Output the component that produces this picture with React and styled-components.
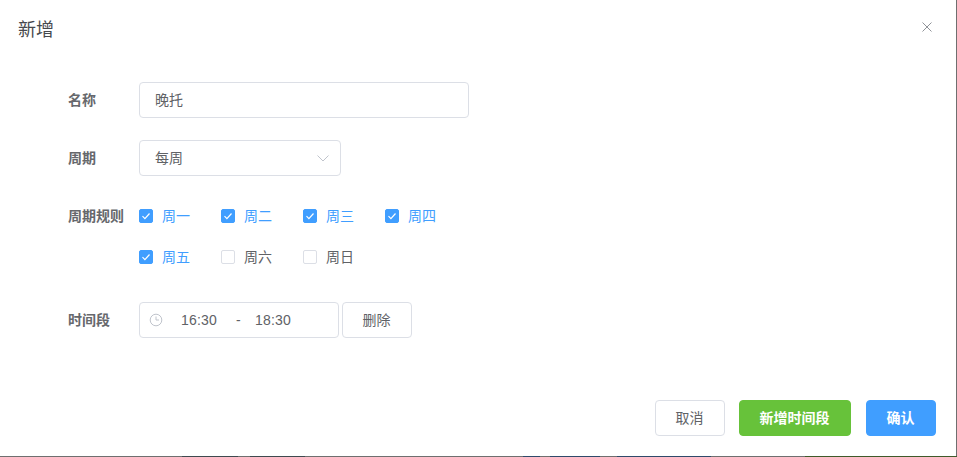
import React from "react";
import styled, { createGlobalStyle } from "styled-components";

const Global = createGlobalStyle`
  html, body { margin: 0; padding: 0; background: #6f6f6f; overflow: hidden; }
  * { box-sizing: border-box; }
`;

const font = `"Liberation Sans", "Noto Sans CJK SC", sans-serif`;

const Dialog = styled.div`
  width: 956px;
  height: 456px;
  background: #fff;
  font-family: ${font};
  display: flex;
  flex-direction: column;
  color: #606266;
`;

const Header = styled.header`
  height: 60px;
  padding: 18px 18px 0;
  display: flex;
  justify-content: space-between;
  align-items: flex-start;
`;

const Title = styled.h2`
  margin: 0;
  font-size: 18px;
  font-weight: 400;
  line-height: 24px;
  color: #47494d;
`;

const Close = styled.button`
  border: 0;
  background: none;
  padding: 0;
  width: 10px;
  height: 10px;
  margin: 4px 6px 0 0;
  display: flex;
  color: #909399;
`;

const Form = styled.form`
  flex: 1;
  padding: 22px 0 0 68px;
  display: flex;
  flex-direction: column;
`;

const Row = styled.div`
  display: flex;
  margin-bottom: ${(p) => p.$mb ?? 22}px;
`;

const Label = styled.label`
  width: 71px;
  flex: none;
  font-size: 14px;
  font-weight: 700;
  line-height: 36px;
  color: #66686c;
`;

const Field = styled.div`
  height: 36px;
  border: 1px solid #dcdfe6;
  border-radius: 4px;
  background: #fff;
  display: flex;
  align-items: center;
  font-size: 14px;
  color: #606266;
  width: ${(p) => p.$w}px;
  padding: 0 ${(p) => p.$pr ?? 15}px 0 15px;
  justify-content: ${(p) => p.$justify ?? "flex-start"};
`;

const FieldText = styled.span`
  padding-bottom: 2px;
`;

const Checks = styled.div`
  display: grid;
  grid-template-columns: repeat(4, 82px);
  row-gap: 5px;
`;

const Check = styled.span`
  height: 36px;
  display: flex;
  align-items: center;
  gap: 9px;
  font-size: 14px;
  color: ${(p) => (p.$on ? "#409eff" : "#606266")};
`;

const CheckText = styled.span`
  padding-bottom: 2px;
`;

const Box = styled.span`
  width: 14px;
  height: 14px;
  border-radius: 2px;
  border: 1px solid ${(p) => (p.$on ? "#409eff" : "#dcdfe6")};
  background: ${(p) => (p.$on ? "#409eff" : "#fff")};
  display: flex;
  align-items: center;
  justify-content: center;
`;

const TimeRange = styled(Field)`
  padding: 0 0 0 9px;
  color: #606266;
`;

const Time = styled.span`
  margin-left: ${(p) => p.$ml}px;
  letter-spacing: 0.2px;
  padding-bottom: 1px;
`;

const Plain = styled.button`
  font-family: ${font};
  font-size: 14px;
  height: 36px;
  border-radius: 4px;
  border: 1px solid ${(p) => p.$bg ?? "#dcdfe6"};
  background: ${(p) => p.$bg ?? "#fff"};
  color: ${(p) => (p.$bg ? "#fff" : "#606266")};
  font-weight: ${(p) => (p.$bg ? 700 : 400)};
  width: ${(p) => p.$w}px;
  padding: 0 1px 2px 0;
  margin-left: ${(p) => p.$ml ?? 0}px;
`;

const Footer = styled.footer`
  display: flex;
  justify-content: flex-end;
  padding: 0 20px 20px 0;
`;

const Bottom = styled.div`
  height: 1px;
  width: 957px;
  background: linear-gradient(
    90deg,
    #6f6f6f 0 182px,
    #3f4a4f 182px 238px,
    #6f6f6f 238px 250px,
    #3f4a4f 250px 305px,
    #6f6f6f 305px 523px,
    #2f4a6a 523px 540px,
    #6f6f6f 540px 550px,
    #2f4a6a 550px 600px,
    #6f6f6f 600px 617px,
    #2f4a6a 617px 711px,
    #6f6f6f 711px 805px,
    #3f5a2a 805px 957px
  );
`;

const days = [["周一", 1], ["周二", 1], ["周三", 1], ["周四", 1], ["周五", 1], ["周六", 0], ["周日", 0]];

export default function App() {
  return (
    <>
      <Global />
      <Dialog>
        <Header>
          <Title>新增</Title>
          <Close aria-label="关闭">
            <svg width="10" height="10" viewBox="0 0 10 10" fill="none" stroke="currentColor" strokeWidth="1">
              <path d="M0.5 0.5l9 9M9.5 0.5l-9 9" />
            </svg>
          </Close>
        </Header>
        <Form>
          <Row>
            <Label>名称</Label>
            <Field $w={330}><FieldText>晚托</FieldText></Field>
          </Row>
          <Row>
            <Label>周期</Label>
            <Field $w={202} $pr={10} $justify="space-between">
              <FieldText>每周</FieldText>
              <svg width="14" height="14" viewBox="0 0 14 14" fill="none" stroke="#c0c4cc" strokeWidth="1">
                <path d="M1.5 4.5L7 10l5.5-5.5" />
              </svg>
            </Field>
          </Row>
          <Row $mb={27}>
            <Label>周期规则</Label>
            <Checks>
              {days.map(([d, on]) => (
                <Check key={d} $on={!!on}>
                  <Box $on={!!on}>
                    {on ? (
                      <svg width="12" height="12" viewBox="0 0 12 12" fill="none" stroke="#fff" strokeWidth="1.2">
                        <path d="M2.5 6.2l2.4 2.4L9.5 3.5" />
                      </svg>
                    ) : null}
                  </Box>
                  <CheckText>{d}</CheckText>
                </Check>
              ))}
            </Checks>
          </Row>
          <Row>
            <Label>时间段</Label>
            <TimeRange $w={200}>
              <svg width="14" height="14" viewBox="0 0 14 14" fill="none" stroke="#c0c4cc" strokeWidth="1">
                <circle cx="7" cy="7" r="5.8" />
                <path d="M7 3.5V7h3" />
              </svg>
              <Time $ml={18}>16:30</Time>
              <Time $ml={19}>-</Time>
              <Time $ml={14}>18:30</Time>
            </TimeRange>
            <Plain $w={70} $ml={3} type="button">删除</Plain>
          </Row>
        </Form>
        <Footer>
          <Plain $w={70} type="button">取消</Plain>
          <Plain $w={112} $ml={14} $bg="#67c23a" type="button">新增时间段</Plain>
          <Plain $w={70} $ml={15} $bg="#409eff" type="button">确认</Plain>
        </Footer>
      </Dialog>
      <Bottom />
    </>
  );
}
